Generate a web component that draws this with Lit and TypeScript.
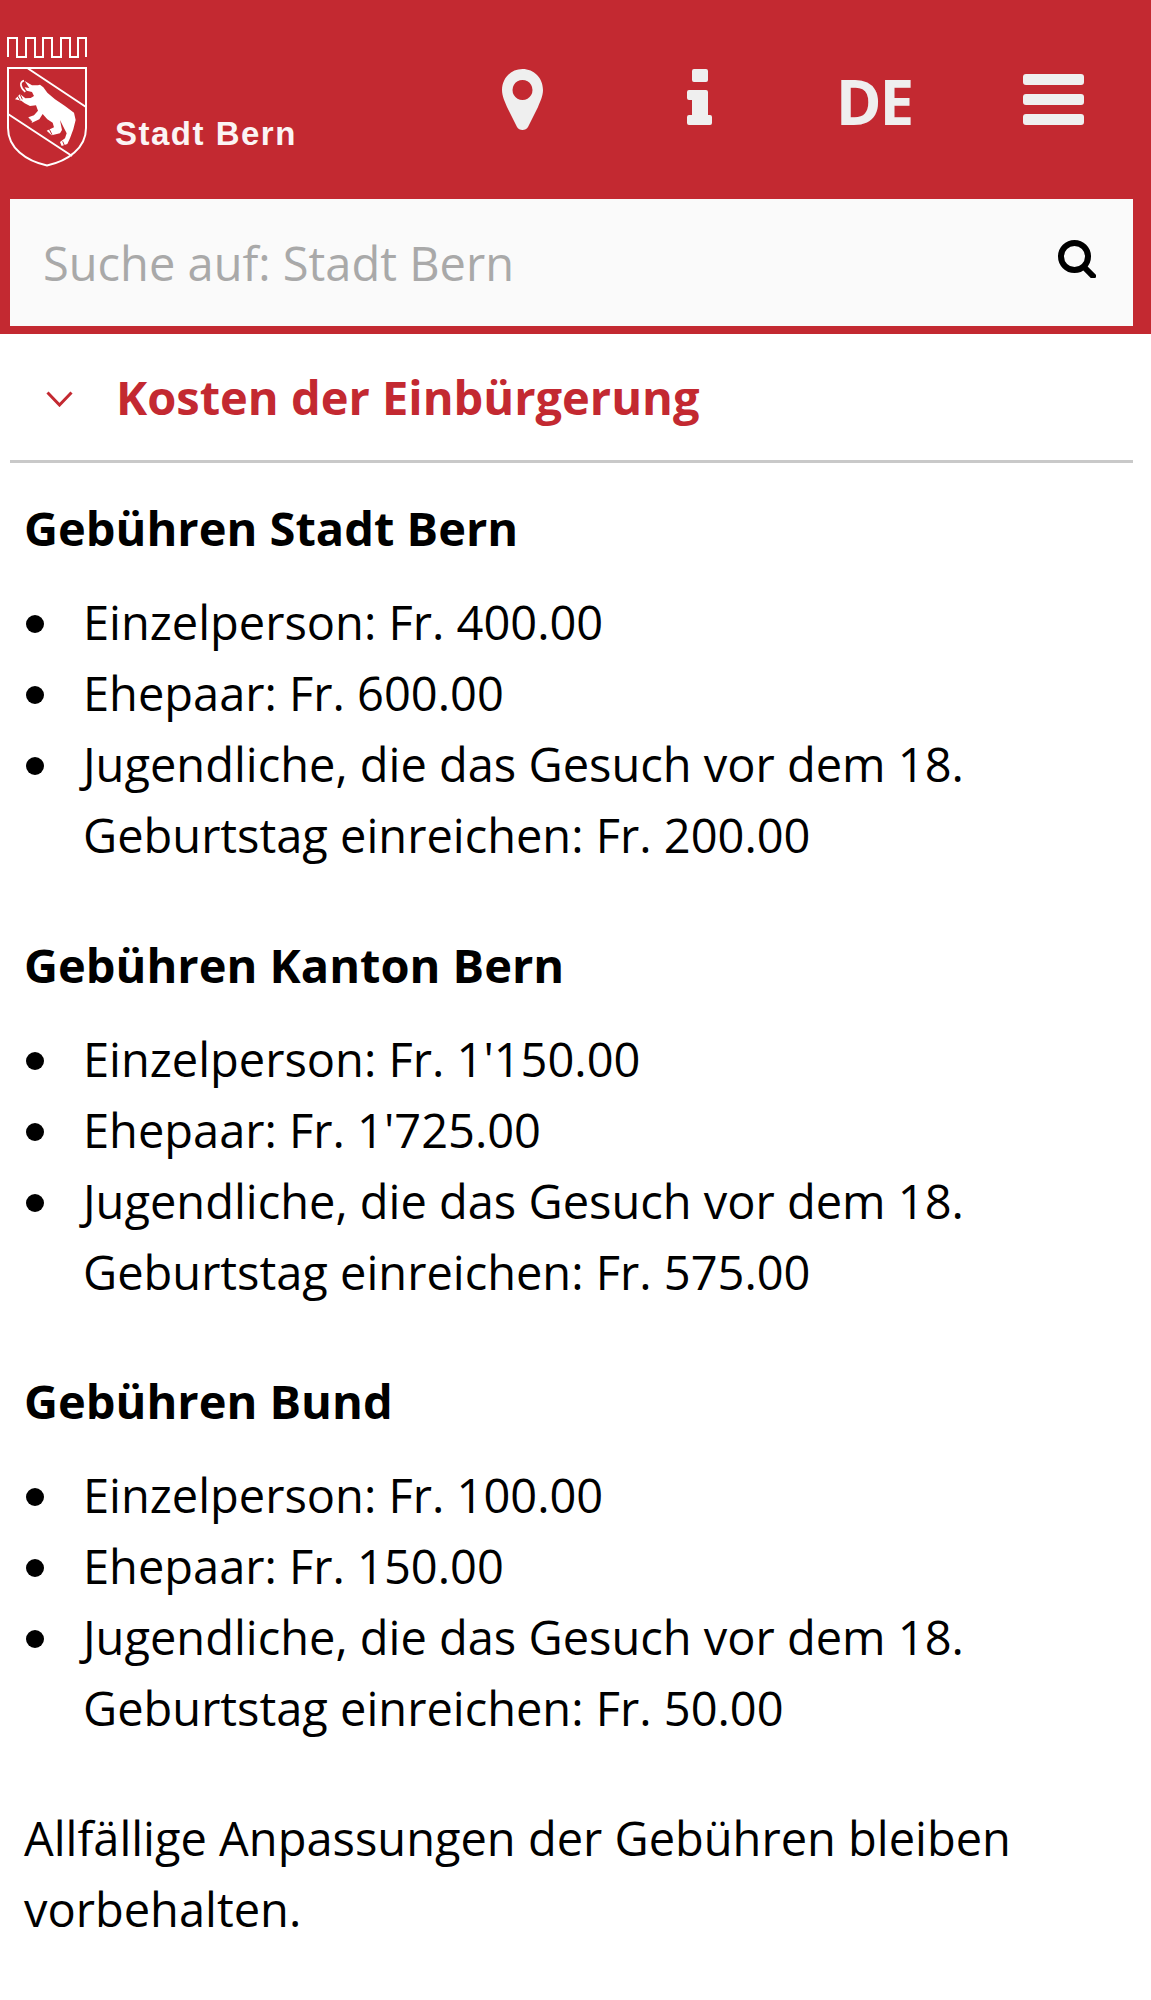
import { LitElement, html, css } from 'lit';
import { customElement } from 'lit/decorators.js';

const sections = [
  { title: 'Gebühren Stadt Bern', rows: ['Einzelperson: Fr. 400.00', 'Ehepaar: Fr. 600.00', 'Jugendliche, die das Gesuch vor dem 18. Geburtstag einreichen: Fr. 200.00'] },
  { title: 'Gebühren Kanton Bern', rows: ["Einzelperson: Fr. 1'150.00", "Ehepaar: Fr. 1'725.00", 'Jugendliche, die das Gesuch vor dem 18. Geburtstag einreichen: Fr. 575.00'] },
  { title: 'Gebühren Bund', rows: ['Einzelperson: Fr. 100.00', 'Ehepaar: Fr. 150.00', 'Jugendliche, die das Gesuch vor dem 18. Geburtstag einreichen: Fr. 50.00'] },
];

@customElement('app-root')
export class AppRoot extends LitElement {
  static styles = css`
    :host {
      display: block;
      height: 2000px;
      background: #fff;
      font-family: 'Open Sans', sans-serif;
      color: #000;
      overflow: hidden;
    }
    .head { background: #c32931; height: 334px; box-sizing: border-box; padding-top: 37px; }
    .top { display: flex; height: 162px; padding-left: 7px; }
    .brand { display: flex; align-items: flex-start; width: 427px; }
    .brand svg { width: 80px; height: 130px; display: block; flex: none; }
    .brand span {
      font-family: 'Liberation Sans', sans-serif;
      font-weight: 700;
      font-size: 33px;
      line-height: 1;
      color: #fbf4f4;
      letter-spacing: 1.500px;
      margin: 80px 0 0 28px;
      white-space: nowrap;
    }
    .nav { display: grid; grid-template-columns: repeat(4, 177px); align-items: start; justify-items: center; padding-top: 32px; height: 100%; box-sizing: border-box; }
    .nav svg { display: block; }
    .ham { margin-top: 5px; }
    .lang { font-size: 62px; font-weight: 700; line-height: 64px; letter-spacing: -2px; color: #efefef; margin: 0 5px 0 0; }
    .search {
      background: #fafafa;
      height: 127px;
      margin: 0 18px 0 10px;
      display: flex;
      align-items: center;
      justify-content: space-between;
      padding: 0 37px 0 33px;
      font-size: 47px;
      color: #a9a9a9;
    }
    .glass { margin-top: -8px; }
    .toggle {
      margin: 0 18px 0 10px;
      height: 129px;
      display: flex;
      align-items: center;
      gap: 43px;
      padding-left: 36px;
      border-bottom: 3px solid #c9c9c9;
      color: #c32931;
      font-size: 47px;
      font-weight: 700;
      box-sizing: border-box;
    }
    .chev { margin-top: 4px; }
    .body { padding: 30px 24px 0; font-size: 47px; line-height: 71px; }
    h2 { margin: 0; font-size: 47px; line-height: 71px; font-weight: 700; }
    ul { margin: 23px 0 58.600px; padding: 0; list-style: none; }
    li { display: flex; }
    li::before {
      content: '';
      flex: none;
      width: 18px;
      height: 18px;
      border-radius: 50%;
      background: #000;
      margin: 28px 39px 0 2px;
    }
    p { margin: 0; }
  `;

  render() {
    return html`
      <header class="head">
        <div class="top">
          <div class="brand">
            <svg viewBox="7 37 80 130" fill="none" stroke="#fff">
              <path d="M8 57V38H17V57H26V38H35V57H43V38H52V57H61V38H70V57H78V38H86V57" stroke-width="2"/>
              <path d="M8 68H86V128C86 148 68 161 47 165.500C26 161 8 148 8 128Z" stroke-width="2"/>
              <path d="M28 68.500L86 107M8 114L72 156" stroke-width="2"/>
              <g transform="translate(10 70) scale(.3333)">
                <path fill="#fff" stroke="none" d="M44 33L66 46L84 46L90 44L100 52L112 68L135 88L165 108L192 128L197 150L190 178L180 205L172 222L155 228L150 216L165 205L170 190L160 170L150 150L156 180L150 190L125 196L110 182L132 172L128 158L112 148L98 132L88 148L66 158L55 142L72 136L84 122L78 106L60 108L44 100L34 92L15 88L30 72L46 85L62 84L72 78L66 66L50 62L44 52L58 54Z"/>
                <path d="M42 32C28 36 30 52 46 66" stroke-width="5"/>
                <path d="M22 76L30 90M30 72L37 88M58 146L66 156M118 178L126 194M158 214L164 228" stroke="#c32931" stroke-width="3"/>
              </g>
            </svg>
            <span>Stadt Bern</span>
          </div>
          <nav class="nav">
            <svg width="41" height="61" viewBox="0 0 41 61"><path fill="#efefef" fill-rule="evenodd" d="M20.500 0C32 0 41 9 41 21C41 27 38 33 36 38L26 58C24 62 17 62 15 58L5 38C3 33 0 27 0 21C0 9 9 0 20.500 0ZM20.500 11a10 10 0 1 0 .01 0Z"/></svg>
            <svg width="25" height="56" viewBox="0 0 25 56"><path fill="#efefef" d="M7 0h12a2 2 0 0 1 2 2v9a2 2 0 0 1-2 2H7a2 2 0 0 1-2-2V2a2 2 0 0 1 2-2ZM2 21h17a2 2 0 0 1 2 2v23h2a2 2 0 0 1 2 2v6a2 2 0 0 1-2 2H2a2 2 0 0 1-2-2v-6a2 2 0 0 1 2-2h3V31H2a2 2 0 0 1-2-2v-6a2 2 0 0 1 2-2Z"/></svg>
            <div class="lang">DE</div>
            <svg class="ham" width="61" height="51" viewBox="0 0 61 51"><g fill="#efefef"><rect width="61" height="11" rx="3"/><rect y="20" width="61" height="11" rx="3"/><rect y="40" width="61" height="11" rx="3"/></g></svg>
          </nav>
        </div>
        <div class="search">
          <span>Suche auf: Stadt Bern</span>
          <svg class="glass" width="38" height="38" viewBox="0 0 38 38" fill="none" stroke="#000"><circle cx="16.500" cy="16.500" r="13.500" stroke-width="6"/><path d="M26 27L35 36" stroke-width="6" stroke-linecap="round"/></svg>
        </div>
      </header>
      <div class="toggle">
        <svg class="chev" width="27" height="16" viewBox="0 0 27 16" fill="none" stroke="#c32931" stroke-width="3"><path d="M1.500 1.500L13.500 14L25.500 1.500"/></svg>
        <span>Kosten der Einbürgerung</span>
      </div>
      <main class="body">
        ${sections.map(s => html`
          <section>
            <h2>${s.title}</h2>
            <ul>${s.rows.map(r => html`<li><span>${r}</span></li>`)}</ul>
          </section>
        `)}
        <p>Allfällige Anpassungen der Gebühren bleiben vorbehalten.</p>
      </main>
    `;
  }
}
